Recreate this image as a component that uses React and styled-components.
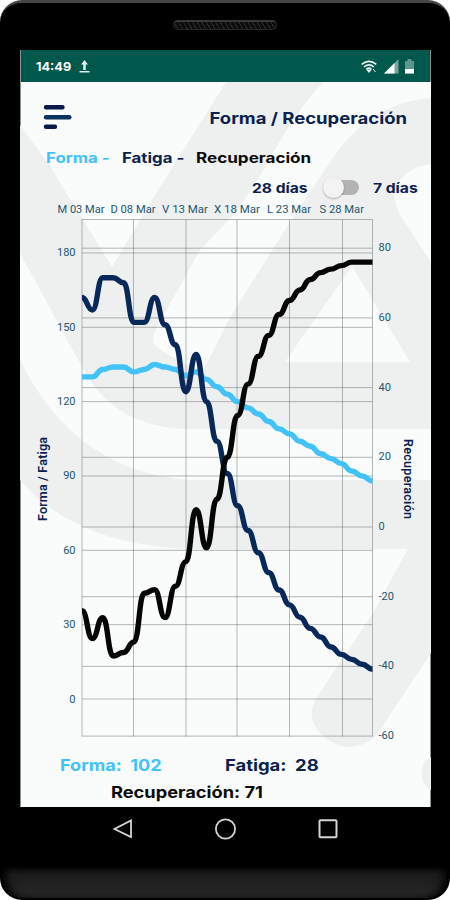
import React from "react";
import styled, { createGlobalStyle } from "styled-components";

const NAVY = "#0b2250";
const SKY = "#41c3fa";

const GlobalStyle = createGlobalStyle`
  * { box-sizing: border-box; }
  body { margin: 0; background: #fff; font-family: Inter, "Open Sans", sans-serif; }
`;

const Phone = styled.main`
  width: 450px;
  height: 900px;
  display: flex;
  flex-direction: column;
  background: #000;
  border-top: 3px solid #454545;
  border-radius: 22px;
  overflow: hidden;
`;

const Earpiece = styled.div`
  height: 47px;
  flex: none;
  display: flex;
  justify-content: center;
  padding-top: 17px;
`;

const SpeakerSlot = styled.div`
  width: 104px;
  height: 10px;
  border: 1px solid #262626;
  border-top: 2px solid #383838;
  border-radius: 6px;
  background: repeating-linear-gradient(60deg, #0c0c0c 0 3px, #2b2b2b 3px 4px);
`;

const Screen = styled.section`
  position: relative;
  isolation: isolate;
  width: 411px;
  height: 757px;
  flex: none;
  margin-left: 20px;
  display: flex;
  flex-direction: column;
  background: #fafbfb;
  border: solid #8c8f8f;
  border-width: 0 1px;
`;

const Watermark = styled.svg`
  position: absolute;
  z-index: -1;
  left: -1px;
  top: 0;
`;

const StatusBar = styled.div`
  height: 31.5px;
  flex: none;
  display: flex;
  align-items: center;
  justify-content: space-between;
  padding: 2px 16px 0 15px;
  background: #00574b;
`;

const StatusGroup = styled.div`
  display: flex;
  align-items: center;
  gap: ${(p) => p.$gap}px;
`;

const Label = styled.span`
  justify-self: start;
  font-size: ${(p) => p.$size || 14}px;
  font-weight: 700;
  line-height: 20px;
  color: ${(p) => p.$color || NAVY};
  white-space: pre;
  transform: scaleX(${(p) => p.$stretch || 1.2});
  transform-origin: ${(p) => p.$from || "left"} center;
`;

const Header = styled.header`
  height: 62px;
  flex: none;
  display: flex;
  align-items: center;
  justify-content: space-between;
  padding: 10px 23px 0 22px;
`;

const Legend = styled.div`
  height: 27px;
  flex: none;
  display: grid;
  grid-template-columns: 76px 74px auto;
  align-items: center;
  padding: 2px 0 0 25px;
`;

const RangeRow = styled.div`
  height: 30px;
  flex: none;
  display: grid;
  grid-template-columns: 70px 51px auto;
  align-items: center;
  padding: 4px 0 0 231px;
`;

const Switch = styled.div`
  width: 35px;
  height: 15px;
  margin-left: 2px;
  border-radius: 8px;
  background: #b3b3b3;
  display: flex;
  align-items: center;
`;

const Thumb = styled.div`
  width: 21px;
  height: 21px;
  flex: none;
  margin-left: -1px;
  border-radius: 50%;
  background: #f3f3f3;
  box-shadow: 0 1px 2px rgba(0, 0, 0, 0.28);
`;

const Chart = styled.svg`
  flex: none;
  display: block;
  margin-left: -1px;
`;

const AxisText = styled.text`
  font-family: Roboto, sans-serif;
  font-size: ${(p) => p.$size || 11}px;
  font-weight: ${(p) => p.$weight || 400};
  fill: ${(p) => p.$fill || "#24566f"};
`;

const Totals = styled.div`
  display: grid;
  grid-template-columns: 165px auto;
  height: 29px;
  flex: none;
  align-items: center;
  padding-left: 39px;
`;

const Recovery = styled.div`
  height: 24px;
  flex: none;
  display: flex;
  align-items: center;
  padding-left: 90px;
`;

const NavBar = styled.nav`
  height: 60px;
  flex: none;
  display: flex;
  justify-content: center;
  gap: 81px;
  padding: 11px 0 0 1px;
`;

const Chin = styled.div`
  flex: 1;
  margin: 0 3px 2px;
  border-radius: 4px 4px 20px 20px;
  background: linear-gradient(#060606, #1b1b1b 25%, #292929);
  box-shadow: inset 8px -2px 8px -5px #000, inset -8px -2px 8px -5px #000;
`;

// Chart geometry, in screen coordinates.
const LEFT = 82;
const STEP = 290.5 / 28;
const loadY = (v) => 699 - v * 2.478;
const balanceY = (v) => 527 - v * 3.485;

const fitness = [130, 130, 133, 134, 134, 132, 133, 135, 134, 133, 130.5, 132, 129, 126, 123, 120, 117.5, 115, 112, 109, 107, 104, 102, 99, 97, 95, 92, 90, 88];
const fatigue = [162, 157, 170, 170, 168, 152, 152, 162, 151, 143, 124, 139, 120, 104, 91, 78, 68, 59, 51, 44, 38, 33, 28.5, 25, 21, 18, 16, 14, 12];
const recovery = [-24, -32, -26, -37, -36, -33, -19, -18, -26, -17, -10, 5, -6, 8, 20, 32, 41, 49, 55, 61, 65, 68, 71, 73, 74, 75, 76, 76, 76];

function curve(values, toY) {
  return values
    .map((v, i) => {
      const x = LEFT + i * STEP;
      const y = toY(v);
      if (i === 0) return `M${x},${y}`;
      const mid = x - STEP / 2;
      return `C${mid},${toY(values[i - 1])} ${mid},${y} ${x},${y}`;
    })
    .join(" ");
}

const dates = [
  ["M 03 Mar", 57.5, 47],
  ["D 08 Mar", 110.5, 45],
  ["V 13 Mar", 162, 46],
  ["X 18 Mar", 214, 46],
  ["L 23 Mar", 267, 44],
  ["S 28 Mar", 319.5, 44.5],
];

function TrendChart() {
  return (
    <Chart width="411" height="550" viewBox="20 201 411 550">
      <g stroke="#5c6161" strokeOpacity=".45" strokeWidth="1">
        {[82, 133.5, 186, 237, 289.5, 342.5, 372.5].map((x) => (
          <line key={x} x1={x} x2={x} y1="219.5" y2="736.5" />
        ))}
        <line x1="82" x2="372.5" y1="219.5" y2="219.5" />
        {[0, 30, 60, 90, 120, 150, 180].map((v) => (
          <line key={v} x1="82" x2="372.5" y1={loadY(v)} y2={loadY(v)} />
        ))}
        {[-60, -40, -20, 0, 20, 40, 60, 80].map((v) => (
          <line key={v} x1="82" x2="372.5" y1={balanceY(v)} y2={balanceY(v)} />
        ))}
      </g>
      <g fill="none" strokeWidth="5.4" strokeLinejoin="round">
        <path d={curve(fitness, loadY)} stroke={SKY} />
        <path d={curve(fatigue, loadY)} stroke="#08285a" />
        <path d={curve(recovery, balanceY)} stroke="#050505" />
      </g>
      {dates.map(([text, x, width]) => (
        <AxisText key={text} x={x} y="213" $size={10.5} textLength={width} lengthAdjust="spacingAndGlyphs">{text}</AxisText>
      ))}
      {[0, 30, 60, 90, 120, 150, 180].map((v) => (
        <AxisText key={v} x="75.5" y={loadY(v) + 3.5} textAnchor="end">{v}</AxisText>
      ))}
      {[-60, -40, -20, 0, 20, 40, 60, 80].map((v) => (
        <AxisText key={v} x="378.5" y={balanceY(v) + 3} textAnchor="start">{v}</AxisText>
      ))}
      <AxisText $size={12.5} $weight={600} $fill={NAVY} transform="translate(46.5 521) rotate(-90)" textLength="84">Forma / Fatiga</AxisText>
      <AxisText $size={12.5} $weight={600} $fill={NAVY} transform="translate(403.5 439) rotate(90)" textLength="80">Recuperación</AxisText>
    </Chart>
  );
}

function Backdrop() {
  return (
    <Watermark width="411" height="757" viewBox="20 50 411 757">
      <path fill="#eef0f0" d="M20 125L50 166L112 267L152 200L226 82H431V653L376 736Q352 757 325 738Q305 721 315 700L373 613L408 549H190Q75 545 20 480Z" />
      <g fill="#fafbfb">
        <path d="M322 84Q287 120 250 197L200 250L155 331Q150 342 158 348Q178 362 203 371L230 317L287 227L330 162Q370 102 431 98V82H322Z" />
        <path d="M322 84Q300 105 265 168L212 250L155 331Q210 360 230 317Z" />
        <path d="M352 266L285 362H410Z" />
        <path d="M431 164Q402 168 395 190Q392 201 402 218L431 262Z" />
        <path d="M20 253L82 367Q115 429 190 429H431V480H190Q75 472 20 360Z" />
      </g>
      <path fill="#eef0f0" d="M431 757Q421 761 422 775Q422 785 431 790Z" />
    </Watermark>
  );
}

export default function App() {
  return (
    <>
      <GlobalStyle />
      <Phone>
        <Earpiece><SpeakerSlot /></Earpiece>
        <Screen>
          <Backdrop />
          <StatusBar>
            <StatusGroup $gap={10}>
              <Label $size={12} $stretch={1.06} $color="#fff">14:49</Label>
              <svg width="11" height="13" viewBox="0 0 11 13" fill="#e2eeeb">
                <path d="M5.5 0L9 4.5H6.8V10H4.2V4.5H2ZM.5 11h10v1.5H.5Z" />
              </svg>
            </StatusGroup>
            <StatusGroup $gap={6}>
              <svg width="16" height="14" viewBox="0 0 16 14" fill="none" stroke="#e9f2f0" strokeWidth="1.6">
                <path d="M.7 4.3Q8-1.6 15.3 4.3M3 7Q8 2.7 13 7M5.3 9.3Q8 7 10.5 9.3" />
                <path d="M6 10h4l-2 2.4zM12 9l2.5 3" fill="#e9f2f0" strokeWidth="1" />
              </svg>
              <svg width="16" height="15" viewBox="0 0 16 15">
                <path d="M15.5 0V14.5H1Z" fill="#78a59e" />
                <path d="M11.5 4V14.5H1Z" fill="#fff" />
              </svg>
              <svg width="9" height="15" viewBox="0 0 9 15">
                <path d="M2.5 0h4v2H9v12.5H0V2h2.5Z" fill="#5f958c" />
                <path d="M0 10h9v4.5H0Z" fill="#fff" />
              </svg>
            </StatusGroup>
          </StatusBar>
          <Header>
            <svg width="29" height="28" viewBox="0 0 29 28" strokeLinecap="round" strokeWidth="4.4">
              <path d="M3 3.2H19.5M3 22.8H12" stroke="#0a1a4c" />
              <path d="M3 13.2H26.3" stroke="#0b3560" />
            </svg>
            <Label $size={16} $stretch={1.155} $from="right">Forma / Recuperación</Label>
          </Header>
          <Legend>
            <Label $color={SKY}>Forma -</Label>
            <Label>Fatiga -</Label>
            <Label $color="#0a0a0a" $stretch={1.22}>Recuperación</Label>
          </Legend>
          <RangeRow>
            <Label $size={13}>28 días</Label>
            <Switch><Thumb /></Switch>
            <Label $size={13}>7 días</Label>
          </RangeRow>
          <TrendChart />
          <Totals>
            <Label $size={16} $color={SKY} $stretch={1.13}>{"Forma:  102"}</Label>
            <Label $size={16} $stretch={1.15}>{"Fatiga:  28"}</Label>
          </Totals>
          <Recovery>
            <Label $size={16} $color="#0a0a0a" $stretch={1.14}>Recuperación: 71</Label>
          </Recovery>
        </Screen>
        <NavBar>
          <svg width="22" height="22" viewBox="0 0 22 22" fill="none" stroke="#d4d4d4" strokeWidth="1.8">
            <path d="M19 2.5V19L2.5 11Z" />
          </svg>
          <svg width="22" height="22" viewBox="0 0 22 22" fill="none" stroke="#d4d4d4" strokeWidth="1.8">
            <circle cx="10.5" cy="11" r="9.6" />
          </svg>
          <svg width="22" height="22" viewBox="0 0 22 22" fill="none" stroke="#d4d4d4" strokeWidth="2">
            <rect x="1.5" y="2.3" width="17" height="17" rx="1" />
          </svg>
        </NavBar>
        <Chin />
      </Phone>
    </>
  );
}
